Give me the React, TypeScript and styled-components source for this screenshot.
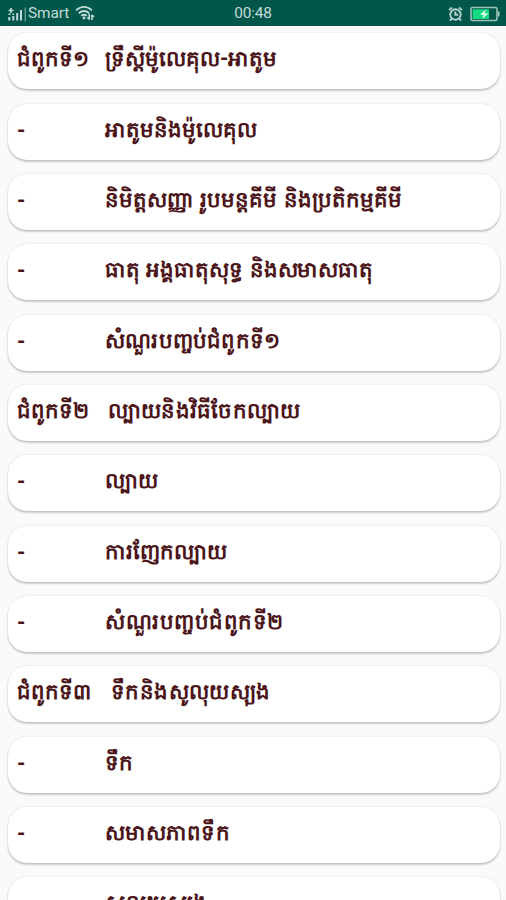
import React from 'react';
import styled, { createGlobalStyle } from 'styled-components';

const GlobalStyle = createGlobalStyle`
  * { box-sizing: border-box; }
  body { margin: 0; background: #fafafa; overflow: hidden; }
`;

const Screen = styled.main`
  width: 506px;
  height: 900px;
  overflow: hidden;
  background: #fafafa;
  font-family: Roboto, sans-serif;
`;

const StatusBar = styled.header`
  display: grid;
  grid-template-columns: 1fr auto 1fr;
  align-items: center;
  height: 25.5px;
  padding: 2px 6px 0 7px;
  background: #01574a;
  color: #c4dcd7;
  font-size: 15.4px;
  line-height: 23px;
`;

const StatusGroup = styled.div<{ $end?: boolean }>`
  display: flex;
  align-items: center;
  justify-content: ${(p) => (p.$end ? 'flex-end' : 'flex-start')};
  gap: ${(p) => (p.$end ? '7px' : '0')};
`;

const Carrier = styled.span`
  margin: 0 6px 0 1px;
  letter-spacing: -0.1px;
`;

const Clock = styled.time`
  margin: 0 1px 0 0;
  letter-spacing: -0.2px;
`;

const List = styled.ul`
  display: flex;
  flex-direction: column;
  gap: 14.35px;
  margin: 0;
  padding: 7.7px 6px 0 8px;
  list-style: none;
`;

const Card = styled.li`
  display: flex;
  flex-shrink: 0;
  gap: 18px;
  height: 56px;
  padding: 11px 9px 0;
  border-radius: 19px;
  background: #fff;
  box-shadow: 0 2px 2px rgba(0, 0, 0, 0.19), 0 0 2px rgba(0, 0, 0, 0.14);
  color: #4b1519;
  font-size: 21.3px;
  font-weight: 700;
  line-height: 30px;
  white-space: nowrap;
`;

const Label = styled.span<{ $width: number }>`
  flex: 0 0 ${(p) => p.$width}px;
  min-width: 0;
`;

const Dash = styled(Label)`
  padding-top: 1px;
`;

const Title = styled.span<{ $tracking: number }>`
  letter-spacing: ${(p) => p.$tracking}px;
  word-spacing: 1.2px;
`;

const Signal = () => (
  <svg width="20" height="16" viewBox="0 0 20 16" fill="none" stroke="#c4dcd7">
    <path d="M2.3 14.5V11M6.3 14.5V10" strokeWidth="2" />
    <path d="M10.2 14.5V7M14 14.5V4" strokeWidth="2" />
    <path d="M1.5 4.5h5M4 2v5M1.5 8.2h2M5.5 8.2h1.6" strokeWidth="1.6" />
    <path d="M18.2 1.5V15.5" strokeWidth="1" opacity=".75" />
  </svg>
);

const Wifi = () => (
  <svg width="20" height="17" viewBox="0 0 20 17" fill="none" stroke="#c4dcd7" strokeWidth="1.8">
    <path d="M1 5.4Q9 -1.6 17 5.4M3.7 8.2Q9 3.8 14.3 8.2M6.2 10.8Q9 8.6 11.8 10.8" />
    <circle cx="9" cy="13" r="1.4" fill="#c4dcd7" stroke="none" />
    <path d="M14.3 9v5.4M12.4 12.4l1.9 2 M17 15V9.8M17 10l2 2" strokeWidth="1.6" />
  </svg>
);

const Alarm = () => (
  <svg width="15" height="16" viewBox="0 0 15 16" fill="none" stroke="#b7d3cd" strokeWidth="1.9">
    <circle cx="7.5" cy="8.5" r="5.2" />
    <path d="M7.3 5.6v3.2h3M1 4.1l3-2.6M14 4.1l-3-2.6M3.8 12.6L2 14.7M11.2 12.6l1.8 2.1" />
  </svg>
);

const Battery = () => (
  <svg width="30" height="16" viewBox="0 0 30 16">
    <rect x="1" y="1.5" width="26" height="13" rx="1.5" fill="none" stroke="#9dc5bb" strokeWidth="1.6" />
    <path d="M28.7 5.5v5" stroke="#9dc5bb" strokeWidth="1.7" />
    <rect x="2.6" y="3.3" width="16.4" height="9.6" fill="#14dc83" />
    <path d="M16 3.4l-6 5.3h3.8l-1.6 4.4 6.3-5.6h-4z" fill="#e5fff2" />
  </svg>
);

interface Row {
  label?: string;
  labelWidth?: number;
  title: string;
  tracking?: number;
}

const rows: Row[] = [
  { label: 'ជំពូកទី១', title: 'ទ្រឹស្តីម៉ូលេគុល-អាតូម' },
  { title: 'អាតូមនិងម៉ូលេគុល' },
  { title: 'និមិត្តសញ្ញា រូបមន្តគីមី និងប្រតិកម្មគីមី', tracking: 0.04 },
  { title: 'ធាតុ អង្គធាតុសុទ្ធ និងសមាសធាតុ', tracking: -0.04 },
  { title: 'សំណួរបញ្ចប់ជំពូកទី១', tracking: 0.2 },
  { label: 'ជំពូកទី២', labelWidth: 73, title: 'ល្បាយនិងវិធីចែកល្បាយ', tracking: 0.22 },
  { title: 'ល្បាយ', tracking: 0.3 },
  { title: 'ការញែកល្បាយ' },
  { title: 'សំណួរបញ្ចប់ជំពូកទី២', tracking: 0.5 },
  { label: 'ជំពូកទី៣', labelWidth: 76, title: 'ទឹកនិងសូលុយសុ្យង', tracking: 0.4 },
  { title: 'ទឹក' },
  { title: 'សមាសភាពទឹក', tracking: 0.1 },
  { title: 'សូលុយសុ្យង', tracking: 0.5 },
];

export default function App() {
  return (
    <Screen>
      <GlobalStyle />
      <StatusBar>
        <StatusGroup>
          <Signal />
          <Carrier>Smart</Carrier>
          <Wifi />
        </StatusGroup>
        <Clock>00:48</Clock>
        <StatusGroup $end>
          <Alarm />
          <Battery />
        </StatusGroup>
      </StatusBar>
      <List>
        {rows.map(({ label, labelWidth = 70, title, tracking = 0 }, i) => (
          <Card key={i}>
            {label ? <Label $width={labelWidth}>{label}</Label> : <Dash $width={labelWidth}>-</Dash>}
            <Title $tracking={tracking}>{title}</Title>
          </Card>
        ))}
      </List>
    </Screen>
  );
}
